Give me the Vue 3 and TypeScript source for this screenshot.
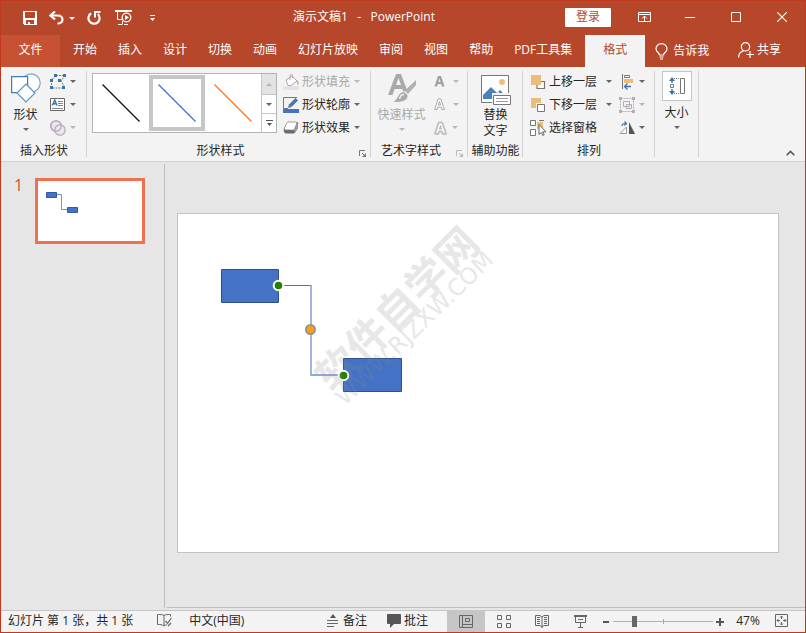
<script setup lang="ts">
import { computed, ref } from 'vue'

interface LineStyle {
  label: string
  color: string
}

const tabs: string[] = ['开始', '插入', '设计', '切换', '动画', '幻灯片放映', '审阅', '视图', '帮助', 'PDF工具集']
const lineStyles: LineStyle[] = [
  { label: '细线 黑色', color: '#111111' },
  { label: '细线 蓝色', color: '#4472c4' },
  { label: '细线 橙色', color: '#f07a2c' },
]

const activeTab = ref('格式')
const activeLine = ref(1)
const zoomPosition = ref(20.5)

// The slider's midpoint is 100%; the right half runs up to 400%.
const zoomPercent = computed(() => {
  const p = Number(zoomPosition.value)
  return Math.round(p <= 50 ? 10 + p * 1.8 : 100 + (p - 50) * 6)
})

function stepZoom(delta: number) {
  zoomPosition.value = Math.min(100, Math.max(0, Number(zoomPosition.value) + delta))
}
</script>

<template>
  <div class="window">
    <header class="titlebar">
      <div class="quick">
        <button class="q-btn" aria-label="保存">
          <svg width="14" height="14" viewBox="0 0 14 14" shape-rendering="crispEdges"><path fill="#fff" fill-rule="evenodd" d="M0 0h14v14H1l-1-1zM2 1v6h10V1zM3 9v4h2v-2h2v2h4V9z" /></svg>
        </button>
        <button class="q-btn q-undo" aria-label="撤消">
          <svg width="15" height="14" viewBox="0 0 15 14"><path d="M2 4.500h6.500c3 0 5 1.700 5 4S11.500 12.500 8.500 12.500" fill="none" stroke="#fff" stroke-width="2.200" /><path d="M6 .5L1.500 4.500 6 8.500" fill="none" stroke="#fff" stroke-width="2.200" /></svg>
          <i class="caret"></i>
        </button>
        <button class="q-btn" aria-label="重复">
          <svg width="14" height="14" viewBox="0 0 14 14"><path d="M4.200 2.300A5.600 5.600 0 1 0 10.800 3" fill="none" stroke="#fff" stroke-width="2.200" /><path d="M8 6.500V1h5.500" fill="none" stroke="#fff" stroke-width="2" /></svg>
        </button>
        <button class="q-btn q-show" aria-label="从头开始放映">
          <svg width="17" height="16" viewBox="0 0 17 16" fill="none" stroke="#fff"><path d="M0 1h17" stroke-width="2" /><path d="M2.500 2v7.500H7M7.500 11v3.500M3 14.500h4M9 14.500h4" /><circle cx="11.500" cy="7.500" r="4.300" stroke-width="1.300" /><path d="M10 5l4 2.500L10 10z" fill="#fff" stroke="none" /></svg>
        </button>
        <button class="q-btn" aria-label="自定义快速访问工具栏">
          <svg width="5" height="6" viewBox="0 0 5 6"><path fill="#fff" d="M0 0h5v1H0zM0 3h5L2.500 6z" /></svg>
        </button>
      </div>
      <h1 class="title">演示文稿1&nbsp;&nbsp; -&nbsp;&nbsp; PowerPoint</h1>
      <div class="window-tools">
        <button class="login">登录</button>
        <button class="w-btn" aria-label="功能区显示选项"><svg width="13" height="10" viewBox="0 0 13 10" fill="none" stroke="#fff"><path d="M.5.5h12v9H.5zM1 2.500h11M6.500 9V4M4 6.500L6.500 4 9 6.500" /></svg></button>
        <button class="w-btn" aria-label="最小化"><svg width="10" height="10" viewBox="0 0 10 10"><path d="M0 5.500h10" stroke="#fff" /></svg></button>
        <button class="w-btn" aria-label="最大化"><svg width="10" height="10" viewBox="0 0 10 10"><path d="M.5.5h9v9h-9z" fill="none" stroke="#fff" /></svg></button>
        <button class="w-btn" aria-label="关闭"><svg width="10" height="10" viewBox="0 0 10 10"><path d="M0 0l10 10M10 0L0 10" stroke="#fff" stroke-width="1.100" /></svg></button>
      </div>
    </header>

    <nav class="tabs">
      <button class="file-tab">文件</button>
      <button v-for="tab in tabs" :key="tab" class="tab" :class="{ active: activeTab === tab }" @click="activeTab = tab">{{ tab }}</button>
      <button class="tab format-tab" :class="{ active: activeTab === '格式' }" @click="activeTab = '格式'">格式</button>
      <button class="tell-me">
        <svg width="13" height="17" viewBox="0 0 13 17" fill="none" stroke="#fff" stroke-width="1.200"><path d="M4.500 12c0-2.200-3.500-3-3.500-6.300a5.500 5 0 0 1 11 0c0 3.300-3.500 4.100-3.500 6.300z" /><path d="M4.500 14h4M5 16h3" /></svg>
        告诉我
      </button>
      <button class="share">
        <svg width="16" height="16" viewBox="0 0 16 16" fill="none" stroke="#fff" stroke-width="1.200"><circle cx="7.500" cy="4.800" r="4.200" /><path d="M.6 15.500c0-3.500 2-6 5-6.700M12 9v7M8.500 12.500H16" /></svg>
        共享
      </button>
    </nav>

    <section class="ribbon">
      <div class="group g-insert">
        <div class="tools">
          <button class="big">
            <svg width="30" height="32" viewBox="0 0 30 32" fill="#fff" stroke="#3f7cb8" stroke-width="1.200"><circle cx="20" cy="10" r="9.200" stroke="#7aa7d2" /><path d="M.6 3.600h16v16H.6z" /><path d="M15 11l9 9-9 9-9-9z" stroke="#5b93c7" /></svg>
            <span>形状</span><i class="caret"></i>
          </button>
          <div class="rows">
            <button class="icon-btn" aria-label="编辑形状">
              <svg width="16" height="15" viewBox="0 0 16 15"><path d="M6 1.500h9L11 7l3.500 6M1.500 6v8H13M6 1.500L1.500 6" fill="none" stroke="#777" stroke-dasharray="2 1" /><path fill="#3973ad" d="M4 0h3v3H4zM13 0h3v3h-3zM0 5h3v3H0zM8 5h3v3H8zM0 12h3v3H0zM12 12h3v3h-3z" /></svg>
              <i class="caret"></i>
            </button>
            <button class="icon-btn" aria-label="文本框">
              <svg width="16" height="13" viewBox="0 0 16 13"><path d="M.5.5h14v12H.5z" fill="#fff" stroke="#666" /><path d="M2.300 7.500L4.700 2 7 7.500M3 5.700h3.500" fill="none" stroke="#3973ad" stroke-width="1.400" /><path d="M8 3.500h5M8 5.500h5M8 7.500h5M2 10.500h11" stroke="#888" /></svg>
              <i class="caret"></i>
            </button>
            <button class="icon-btn" disabled aria-label="合并形状">
              <svg width="16" height="16" viewBox="0 0 16 16" fill="#eee6ee" stroke="#b5afb5" stroke-width="1.300"><circle cx="6" cy="6" r="5.200" /><circle cx="10" cy="10" r="5.200" /><circle cx="6" cy="6" r="5.200" fill="none" /></svg>
              <i class="caret"></i>
            </button>
          </div>
        </div>
        <div class="caption"><span>插入形状</span></div>
      </div>

      <div class="group g-styles">
        <div class="tools">
          <div class="gallery">
            <button v-for="(line, i) in lineStyles" :key="line.label" class="line-cell" :class="{ picked: activeLine === i }" :aria-label="line.label" @click="activeLine = i">
              <svg width="38" height="38" viewBox="0 0 38 38"><path d="M.5.5l37 37" :stroke="line.color" stroke-width="1.200" /></svg>
            </button>
            <div class="scroll">
              <button disabled aria-label="上一行"><i class="caret up"></i></button>
              <button aria-label="下一行"><i class="caret"></i></button>
              <button aria-label="更多"><svg width="7" height="6" viewBox="0 0 7 6"><path fill="#555" d="M0 0h7v1H0zM1 3h5L3.500 6z" /></svg></button>
            </div>
          </div>
          <div class="rows">
            <button class="row-btn" disabled>
              <svg width="16" height="16" viewBox="0 0 16 16"><path d="M3 6l6-4 5 5-6 4.500H5z" fill="#fff" stroke="#aaa" /><path d="M7 6V1.500C7 0 9.500 0 9.500 1.500V4" fill="none" stroke="#aaa" /><path d="M14 6c2 2 2 4 1 5-1-1-1-3-1-5z" fill="#aaa" /><path d="M0 12h16v4H0z" fill="#e8e1e6" /></svg>
              <span>形状填充</span><i class="caret"></i>
            </button>
            <button class="row-btn">
              <svg width="16" height="16" viewBox="0 0 16 16"><path d="M14 .5H.5v11H5" fill="none" stroke="#777" /><path d="M5 11l1-3.500L12.500 1l2.500 2.500L8.500 10z" fill="#3f78b5" /><path d="M5 11l1-3.500L8.500 10z" fill="#8b8b8b" /><path d="M0 12h16v4H0z" fill="#4472c4" /></svg>
              <span>形状轮廓</span><i class="caret"></i>
            </button>
            <button class="row-btn">
              <svg width="16" height="14" viewBox="0 0 16 14"><path d="M5 1h8.500C15 1 15.500 2 15 3.500V7l-3 4.500c-.5.800-1 1-2 1H3.500C1.500 12.500.5 11 .7 8z" fill="#6a6a6a" /><path d="M13 2l2 1.500V7l-3 4.500-1-2z" fill="#9a9a9a" /><path d="M6 1h6.500c1.200 0 1.500.8 1.200 1.700L11.800 7.500c-.4 1-1 1.500-2 1.500H3C1.500 9 1 8.200 1.500 7L3.500 2.500C4 1.500 4.800 1 6 1z" fill="#fff" stroke="#858585" stroke-width=".8" /></svg>
              <span>形状效果</span><i class="caret"></i>
            </button>
          </div>
        </div>
        <div class="caption"><span>形状样式</span>
          <button class="launcher" aria-label="设置形状格式"><svg width="7" height="7" viewBox="0 0 7 7"><path d="M.5 6V.5H6M3 3l3 3" fill="none" stroke="#777" /><path d="M7 3v4H3z" fill="#777" /></svg></button>
        </div>
      </div>

      <div class="group g-wordart">
        <div class="tools">
          <button class="big" disabled>
            <svg width="28" height="32" viewBox="0 0 28 32"><path d="M0 22L8 1h5l6 16-3 3-1.800-4H6.500L4.500 22zM8 12h5L10.500 5z" fill="#a9a9a9" fill-rule="evenodd" /><path d="M28 7L17 17.500l3 3.500 8-9z" fill="#b0b0b0" /><path d="M16 18.500l4 3.500c.5 5-5 8.500-15.500 7 5.500-2 5-10.500 11.500-10.500z" fill="#a9a9a9" stroke="#f3f3f3" /><path d="M11.500 26c.5-3 2-4.500 4.500-4.500" fill="none" stroke="#eee" stroke-width="1.500" /></svg>
            <span>快速样式</span><i class="caret"></i>
          </button>
          <div class="rows">
            <button class="icon-btn" disabled aria-label="文本填充"><svg width="11" height="13" viewBox="0 0 11 13"><path d="M.5 11.500L4 1h3l3.500 10.500H8L7.200 9H3.800L3 11.500zM4.400 7h2.200L5.500 3.300z" fill="#a0a0a0" fill-rule="evenodd" /></svg><i class="caret"></i></button>
            <button class="icon-btn" disabled aria-label="文本轮廓"><svg width="11" height="13" viewBox="0 0 11 13"><path d="M.7 11.500L4 1h3l3.300 10.500H8L7.200 9H3.800L3 11.500zM4.400 7h2.200L5.500 3.300z" fill="#fff" stroke="#aaa" fill-rule="evenodd" /></svg><i class="caret"></i></button>
            <button class="icon-btn glow" disabled aria-label="文本效果"><svg width="13" height="14" viewBox="0 0 13 14"><path d="M1.500 12.500L5 2h3l3.500 10.500H9L8.200 10H4.800L4 12.500zM5.400 8h2.200L6.500 4.300z" fill="#fff" stroke="#c9c9c9" stroke-width="3" stroke-linejoin="round" /><path d="M1.500 12.500L5 2h3l3.500 10.500H9L8.200 10H4.800L4 12.500zM5.400 8h2.200L6.500 4.300z" fill="#fff" stroke="#aaa" stroke-width=".7" fill-rule="evenodd" /></svg><i class="caret"></i></button>
          </div>
        </div>
        <div class="caption"><span>艺术字样式</span>
          <button class="launcher" disabled aria-label="设置文本效果格式"><svg width="7" height="7" viewBox="0 0 7 7"><path d="M.5 6V.5H6M3 3l3 3" fill="none" stroke="#bbb" /><path d="M7 3v4H3z" fill="#bbb" /></svg></button>
        </div>
      </div>

      <div class="group g-alt">
        <div class="tools centered">
          <button class="big">
            <svg width="30" height="32" viewBox="0 0 30 32"><path d="M.5 2.500h27v27H.5z" fill="#fff" stroke="#777" /><circle cx="21" cy="9" r="3" fill="#eebf78" /><path d="M2 26v-4l8-8 6 6 3-3 5 5v4z" fill="#4a7fb8" /><path d="M13 15l8 8" stroke="#fff" /><path d="M11 20h20v12H11z" fill="#f3f3f3" /><path d="M12.500 22.500h17v9h-17z" fill="#fff" stroke="#777" /><path d="M15 25.500h12M15 28.500h12" stroke="#999" /></svg>
            <span>替换<br />文字</span>
          </button>
        </div>
        <div class="caption"><span>辅助功能</span></div>
      </div>

      <div class="group g-arrange">
        <div class="tools">
          <div class="rows">
            <button class="row-btn"><svg width="16" height="16" viewBox="0 0 16 16"><path d="M14.500 7v7.500H7V11M10 7.500h4.500" fill="#fff" stroke="#777" stroke-width="1.200" /><path d="M1 1h10v10H1z" fill="#ebbd78" /></svg><span>上移一层</span><i class="caret"></i></button>
            <button class="row-btn"><svg width="16" height="16" viewBox="0 0 16 16"><path d="M1 1h10v10H1z" fill="#ebbd78" /><path d="M6 6h10v10H6z" fill="#f3f3f3" /><path d="M7.500 7.500h7v7h-7z" fill="#fff" stroke="#777" /></svg><span>下移一层</span><i class="caret"></i></button>
            <button class="row-btn"><svg width="16" height="16" viewBox="0 0 16 16"><path d="M7 2h6v7H7z" fill="#ebbd78" /><path d="M.5.5h5v5h-5zM.5 9.500h5v6h-5zM9 .5h5" fill="#fff" stroke="#777" /><path d="M9 4.500v10l2.300-2 1.500 3 1.400-.7-1.500-3H16z" fill="#fff" stroke="#666" /></svg><span>选择窗格</span></button>
          </div>
          <div class="rows second">
            <button class="icon-btn" aria-label="对齐"><svg width="16" height="16" viewBox="0 0 16 16"><path d="M3.500 0v15" stroke="#777" /><path d="M5.500 1.500h5v2h-5z" fill="#fff" stroke="#777" /><path d="M5 5h9v4H5z" fill="#ebbd78" /><path d="M12 12.500H6M8.500 9.500l-3 3 3 3" fill="none" stroke="#3973ad" stroke-width="1.300" /></svg><i class="caret"></i></button>
            <button class="icon-btn" disabled aria-label="组合"><svg width="16" height="16" viewBox="0 0 16 16" fill="none" stroke="#b5adb5"><path d="M1.500 1.500h13v13h-13z" stroke-dasharray="2 1" /><path d="M4.500 4.500h6v5h-6zM7.500 7.500h5v4h-5z" /><path d="M0 0h3v3H0zM13 0h3v3h-3zM0 13h3v3H0zM13 13h3v3h-3z" fill="#b5adb5" stroke="none" /></svg><i class="caret"></i></button>
            <button class="icon-btn" aria-label="旋转"><svg width="16" height="14" viewBox="0 0 16 14"><path d="M7.500 6v6.500H1z" fill="#fff" stroke="#999" /><path d="M10 1v12h6z" fill="#555" /><path d="M3 5c0-2 1.500-2.500 4-2.500M5.500.5l2 2-2 2" fill="none" stroke="#3973ad" stroke-width="1.200" /></svg><i class="caret"></i></button>
          </div>
        </div>
        <div class="caption"><span>排列</span></div>
      </div>

      <div class="group g-size">
        <div class="tools centered">
          <button class="big">
            <span class="size-box"><svg width="16" height="18" viewBox="0 0 16 18"><path d="M11.500 1.500h4v15h-4z" fill="#fff" stroke="#777" /><path d="M5 1.500h6M5 16.500h6" stroke="#777" stroke-dasharray="1 1" /><path d="M1.500 7.500h3v3h-3z" fill="#fff" stroke="#777" /><path d="M0 4l3-4 3 4zM0 14l3 4 3-4z" fill="#3973ad" /><path d="M3 3v3M3 12v3" stroke="#3973ad" stroke-width="1.500" /></svg></span>
            <span>大小</span><i class="caret"></i>
          </button>
        </div>
        <div class="caption"></div>
      </div>
      <button class="collapse" aria-label="折叠功能区"><svg width="9" height="6" viewBox="0 0 9 6"><path d="M.7 5.300L4.500 1.500l3.800 3.800" fill="none" stroke="#555" stroke-width="1.600" /></svg></button>
    </section>

    <main class="work">
      <aside class="slides">
        <span class="number">1</span>
        <button class="thumb" aria-label="幻灯片 1">
          <svg viewBox="0 0 104 60"><path d="M18 13.500h5.500v15H30" fill="none" stroke="#6f94d4" /><path d="M8.500 11.500h10v5h-10zM29.500 26.500h10v5h-10z" fill="#4472c4" stroke="#3159a5" /></svg>
        </button>
      </aside>
      <section class="editor">
        <div class="slide">
          <svg viewBox="0 0 600 338">
            <path d="M101 71.500h32" stroke="#4472c4" />
            <path d="M133 71v90h33" fill="none" stroke="#6a90d2" stroke-width="1.300" />
            <path d="M43.500 55.500h57v33h-57zM165.500 144.500h58v33h-58z" fill="#4472c4" stroke="#2f528f" />
            <g stroke="#fff" stroke-width="2" fill="#267f00"><circle cx="100.500" cy="71.500" r="4.800" /><circle cx="165.500" cy="161.500" r="4.800" /></g>
            <circle cx="132.500" cy="115.500" r="4.600" fill="#f5a11c" stroke="#929292" stroke-width="1.800" />
            <g class="mark">
              <text class="mark-name" transform="translate(230 106) rotate(-45)">软件自学网</text>
              <text class="mark-site" transform="translate(242 120) rotate(-44)">WWW.RJZXW.COM</text>
            </g>
          </svg>
        </div>
      </section>
    </main>

    <footer class="status">
      <span class="page-info">幻灯片 第 1 张，共 1 张</span>
      <button class="s-btn spell" aria-label="拼写检查"><svg width="15" height="13" viewBox="0 0 15 13" fill="none" stroke="#666"><path d="M7 1.500C5 .3 3 .5.500.5v10c2.500 0 4.500 0 6.500 1.500V1.500C8.500.5 10 .5 13.500.500v2M7 12c1-.8 2-1.200 3-1.300" /><path d="M8.500 7l2 2.300L14.500 4M11 12l3-3" stroke-width="1.200" /></svg></button>
      <button class="s-btn">中文(中国)</button>
      <span class="spacer"></span>
      <button class="s-btn notes"><svg width="12" height="13" viewBox="0 0 12 13"><path d="M3 4l3-4 3 4z" fill="#555" /><path d="M0 6.500h11M0 9.500h11M0 12.500h7" stroke="#666" /></svg>备注</button>
      <button class="s-btn comments"><svg width="14" height="14" viewBox="0 0 14 14"><path d="M1 0h12q1 0 1 1v8q0 1-1 1H7l-4 4v-4H1q-1 0-1-1V1q0-1 1-1z" fill="#555" /></svg>批注</button>
      <div class="views">
        <button class="view on" aria-label="普通视图"><svg width="14" height="13" viewBox="0 0 14 13" fill="none" stroke="#666"><path d="M.5.5h13v12H.5zM3.500 1v11M4 9.500h9M6.500 3.500h4v3h-4z" /></svg></button>
        <button class="view" aria-label="幻灯片浏览"><svg width="14" height="13" viewBox="0 0 14 13" fill="none" stroke="#666"><path d="M.5.5h4v4h-4zM9.500.5h4v4h-4zM.5 8.500h4v4h-4zM9.500 8.500h4v4h-4z" /></svg></button>
        <button class="view" aria-label="阅读视图"><svg width="14" height="13" viewBox="0 0 14 13" fill="none" stroke="#666"><path d="M.5.5H5L7 2 9 .5h4.500v10H9L7 12l-2-1.500H.5zM7 2v11M2 2.500h3M2 4.500h3M2 6.500h3M2 8.500h3M9 2.500h3M9 4.500h3M9 6.500h3M9 8.500h3" /></svg></button>
        <button class="view" aria-label="幻灯片放映"><svg width="13" height="13" viewBox="0 0 13 13" fill="none" stroke="#666"><path d="M0 1h13" stroke-width="2" /><path d="M1.500 2v5.500h10V2M4 4.500h5M6.500 8v4M4 12.500h5" /></svg></button>
      </div>
      <button class="zoom-step" aria-label="缩小" @click="stepZoom(-5)"><svg width="7" height="8" viewBox="0 0 7 8"><path d="M0 4h6" stroke="#555" stroke-width="2" /></svg></button>
      <input v-model="zoomPosition" class="zoom" type="range" min="0" max="100" step="0.5" aria-label="显示比例" />
      <button class="zoom-step" aria-label="放大" @click="stepZoom(5)"><svg width="8" height="8" viewBox="0 0 8 8"><path d="M0 4h8M4 0v8" stroke="#555" stroke-width="2" /></svg></button>
      <button class="s-btn percent">{{ zoomPercent }}%</button>
      <button class="s-btn fit" aria-label="使幻灯片适应当前窗口"><svg width="13" height="13" viewBox="0 0 13 13" fill="none" stroke="#666"><path d="M.5.5h12v12H.5z" /><path d="M6.500 2v3M6.500 8v3M2 6.500h3M8 6.500h3M5 3.500l1.500-1.500L8 3.500M5 9.500L6.500 11 8 9.500M3.500 5L2 6.500 3.500 8M9.500 5L11 6.500 9.500 8" /></svg></button>
    </footer>
  </div>
</template>

<style>
body {
  margin: 0;
}
</style>

<style scoped>
.window {
  box-sizing: border-box;
  display: flex;
  flex-direction: column;
  min-height: 100vh;
  border: 1px solid #bf3a1d;
  background: #e6e6e6;
  color: #262626;
  font: 12px/16px "Open Sans", "Noto Sans CJK SC", sans-serif;
}
button {
  display: flex;
  align-items: center;
  justify-content: center;
  margin: 0;
  padding: 0;
  border: 0;
  background: none;
  color: inherit;
  font: inherit;
  white-space: nowrap;
}
svg {
  display: block;
  flex: none;
}
.caret {
  flex: none;
  width: 0;
  border: 3px solid transparent;
  border-top-color: #666;
  border-bottom: 0;
}
.caret.up {
  border-top: 0;
  border-bottom: 3px solid #b5b5b5;
}
button:disabled {
  color: #a8a8a8;
}
button:disabled .caret:not(.up) {
  border-top-color: #b8b8b8;
}

.titlebar {
  display: flex;
  align-items: center;
  height: 34px;
  background: #b7472a;
  color: #fff;
}
.quick {
  display: flex;
  align-items: center;
  padding-left: 18px;
}
.q-btn {
  width: 22px;
  height: 26px;
}
.q-undo {
  gap: 5px;
  width: 42px;
}
.q-undo .caret {
  border-top-color: #fff;
}
.q-show {
  width: 36px;
}
.title {
  flex: 1;
  margin: 0;
  padding-bottom: 2px;
  font: inherit;
  text-align: center;
}
.window-tools {
  display: flex;
  align-items: center;
}
.login {
  width: 46px;
  height: 19px;
  margin: 0 10px 2px 0;
  border-radius: 1px;
  background: #fff;
  color: #b7472a;
}
.w-btn {
  width: 46px;
  height: 30px;
  padding-bottom: 2px;
}

.tabs {
  display: flex;
  height: 32px;
  background: #b7472a;
  color: #fff;
}
.file-tab {
  width: 59px;
  margin-right: 3px;
  padding-bottom: 2px;
  background: #c75133;
}
.tab {
  margin-right: 1px;
  padding: 0 10px 2px;
}
.tab.active {
  background: #f3f3f3;
  color: #b7472a;
}
.format-tab {
  margin-left: 2px;
  padding: 0 18px 2px;
}
.tell-me {
  gap: 5px;
  padding: 0 9px;
}
.share {
  gap: 3px;
  margin-left: auto;
  padding: 0 24px 2px 8px;
}

.ribbon {
  display: flex;
  height: 94px;
  border-bottom: 1px solid #d2d2d2;
  background: #f3f3f3;
}
.group {
  display: flex;
  flex: none;
  flex-direction: column;
  box-sizing: border-box;
  padding-top: 3px;
  background: linear-gradient(#d2d2d2, #d2d2d2) right 4px / 1px 86px no-repeat;
}
.g-insert { width: 86px; }
.g-styles { width: 284px; }
.g-wordart { width: 97px; }
.g-alt { width: 55px; }
.g-arrange { width: 132px; }
.g-size { width: 44px; }
.tools {
  display: flex;
  height: 69px;
}
.tools.centered {
  justify-content: center;
}
.caption {
  display: flex;
  align-items: center;
  height: 22px;
}
.caption span {
  flex: 1;
  padding-top: 1px;
  text-align: center;
}
.launcher {
  align-self: flex-end;
  width: 17px;
  height: 16px;
}
.rows {
  display: grid;
  grid-auto-rows: 23px;
}
.big {
  flex-direction: column;
  justify-content: flex-start;
  padding-top: 3px;
}
.big svg {
  margin-bottom: 2px;
}
.big .caret {
  margin-top: 5px;
}
.g-insert .big {
  width: 49px;
}
.g-wordart .big {
  width: 61px;
}
.icon-btn {
  justify-content: flex-start;
  gap: 4px;
}
.g-wordart .icon-btn {
  gap: 8px;
  padding-left: 2px;
}
.g-wordart .glow {
  gap: 5px;
}
.row-btn {
  justify-content: flex-start;
  gap: 3px;
}
.row-btn .caret {
  margin-left: 1px;
}
.gallery {
  display: flex;
  box-sizing: border-box;
  height: 60px;
  margin: 3px 6px 0 5px;
  border: 1px solid #b4b4b4;
  background: #fff;
}
.line-cell {
  box-sizing: border-box;
  width: 56px;
  height: 56px;
  margin-top: 1px;
  border: 4px solid transparent;
}
.line-cell.picked {
  border-color: #c6c6c6;
}
.scroll {
  display: grid;
  grid-template-rows: 20px 18px 18px;
  gap: 1px;
  width: 14px;
  border-left: 1px solid #c6c6c6;
  background: #c6c6c6;
}
.scroll button {
  background: #fff;
}
.scroll button:disabled {
  background: #e3e3e3;
}
.g-arrange .rows {
  padding-left: 7px;
}
.g-arrange .row-btn .caret {
  margin-left: 6px;
}
.g-arrange .rows.second {
  padding-left: 7px;
}
.g-size .tools {
  padding-right: 1px;
}
.g-size .big {
  padding-top: 1px;
}
.size-box {
  display: flex;
  align-items: center;
  justify-content: center;
  box-sizing: border-box;
  width: 30px;
  height: 30px;
  margin-bottom: 4px;
  border: 1px solid #c6c6c6;
  background: #fff;
}
.size-box svg {
  margin: 0;
}
.collapse {
  align-self: flex-end;
  width: 17px;
  height: 17px;
  margin: 0 6px 0 auto;
}

.work {
  display: flex;
  flex: 1;
  padding-top: 2px;
}
.slides {
  display: flex;
  align-items: flex-start;
  box-sizing: border-box;
  width: 164px;
  padding: 14px 0 0 13px;
  margin-bottom: 2px;
  border-right: 1px solid #bdbdbd;
}
.number {
  width: 21px;
  color: #d35230;
  font-size: 16px;
  line-height: 14px;
}
.thumb {
  box-sizing: border-box;
  width: 110px;
  height: 66px;
  border: 3px solid #f07150;
  background: #fff;
}
.thumb svg {
  width: 100%;
}
.editor {
  display: flex;
  flex: 1;
  align-items: center;
  margin: 0 0 2px 2px;
  padding: 0 26px 6px 10px;
  border-bottom: 1px solid #bdbdbd;
}
.slide {
  flex: 1;
  border: 1px solid #c3c3c3;
  background: #fff;
}
.slide svg {
  width: 100%;
}
.mark {
  fill: #8c8c8c;
  opacity: 0.2;
  text-anchor: middle;
}
.mark-name {
  font-family: "Noto Sans CJK SC", sans-serif;
  font-size: 42px;
  font-weight: 700;
}
.mark-site {
  font-family: "DejaVu Sans", sans-serif;
  font-size: 23px;
}

.status {
  display: flex;
  align-items: center;
  height: 21px;
  border-top: 1px solid #c6c6c6;
  background: #f3f3f3;
}
.page-info {
  padding: 0 24px 2px 7px;
}
.s-btn {
  padding-bottom: 2px;
}
.spell {
  margin-right: 17px;
}
.spacer {
  flex: 1;
}
.notes {
  gap: 4px;
  margin-right: 20px;
}
.comments {
  gap: 3px;
  margin-right: 19px;
}
.views {
  display: flex;
  align-self: stretch;
}
.view {
  width: 38px;
}
.view.on {
  background: #c6c6c6;
}
.zoom-step {
  width: 14px;
}
.zoom {
  width: 100px;
  height: 16px;
  margin: 0;
  appearance: none;
  background:
    linear-gradient(#a8a8a8, #a8a8a8) center / 1px 5px no-repeat,
    linear-gradient(#b0b0b0, #b0b0b0) center / 100% 1px no-repeat;
}
.zoom::-webkit-slider-thumb {
  width: 5px;
  height: 11px;
  appearance: none;
  background: #666;
}
.percent {
  width: 42px;
}
.fit {
  width: 24px;
  margin-right: 12px;
}
</style>
